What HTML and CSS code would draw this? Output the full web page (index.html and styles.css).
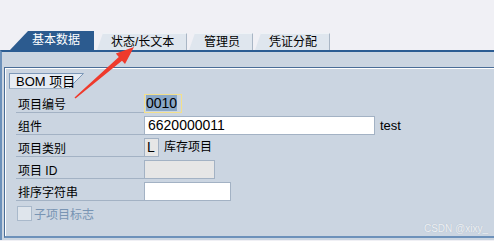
FILE: index.html
```html
<!DOCTYPE html>
<html lang="zh-CN">
<head>
    <meta charset="UTF-8">
    <title>BOM 项目</title>
    <link rel="stylesheet" href="styles.css">
</head>
<body>
    <div class="tabs">
        <div class="tab active">基本数据</div>
        <div class="tab tab-status">状态/长文本</div>
        <div class="tab tab-admin">管理员</div>
        <div class="tab tab-voucher">凭证分配</div>
    </div>

    <div class="panel">
        <div class="group">
            <div class="group-title">
                <span class="group-name">BOM 项目</span>
                <svg class="group-slant" width="16" height="16" viewBox="0 0 16 16">
                    <polygon points="0,0 15.5,0 0,16" fill="#e6ecf3"/>
                    <line x1="15.5" y1="0.5" x2="0.5" y2="15.5" stroke="#7d98b8" stroke-width="1"/>
                    <line x1="0" y1="0.5" x2="15.5" y2="0.5" stroke="#7d98b8" stroke-width="1"/>
                </svg>
            </div>
            <div class="rows">
                <div class="label">项目编号</div>
                <div class="value"><span class="field field-focus"><span class="sel">0010</span></span></div>

                <div class="label">组件</div>
                <div class="value"><span class="field field-wide">6620000011</span><span class="after">test</span></div>

                <div class="label">项目类别</div>
                <div class="value"><span class="field field-small">L</span><span class="after">库存项目</span></div>

                <div class="label">项目 ID</div>
                <div class="value"><span class="field field-disabled"></span></div>

                <div class="label">排序字符串</div>
                <div class="value"><span class="field field-sort"></span></div>
            </div>
            <div class="check-row">
                <span class="checkbox"></span>
                <span class="check-label">子项目标志</span>
            </div>
        </div>
    </div>

    <!-- annotation arrow drawn over the screenshot -->
    <svg class="arrow" width="494" height="241" viewBox="0 0 494 241">
        <polygon points="74.5,97.5 118.8,56.9 115.8,53.5 134,47 125,64.1 122,60.7 75.5,98.5" fill="#ef3a2c"/>
    </svg>

    <div class="watermark">CSDN @xixy_</div>
</body>
</html>
```

FILE: styles.css
```css
/* Page */
body {
    margin: 0;
    width: 494px;
    height: 241px;
    overflow: hidden;
    position: relative;
    background-color: #f0f0f5;
    font-family: "Liberation Sans", "Noto Sans CJK SC", sans-serif;
    font-size: 12px;
    color: #000;
}

/* Tab strip */
.tabs {
    display: flex;
    align-items: flex-end;
    height: 19px;
    padding: 31px 0 0 10px;
}

.tab {
    box-sizing: border-box;
    height: 17px;
    line-height: 16px;
    padding-left: 14px;
    margin-right: 2px;
    background-color: #dfe6ee;
    border-top: 1px solid #eef2f6;
    border-right: 1px solid #a9b6c5;
    clip-path: polygon(6px 0, 100% 0, 100% 100%, 0 100%);
    white-space: nowrap;
}

.tab.active {
    width: 84px;
    height: 19px;
    line-height: 19px;
    padding-left: 22px;
    margin-right: 3px;
    background-color: #2c5b8f;
    border: none;
    color: #fff;
    clip-path: polygon(18px 0, 100% 0, 100% 100%, 0 100%);
}

.tab-status {
    width: 90px;
}

.tab-admin {
    width: 64px;
    padding-left: 15px;
}

.tab-voucher {
    width: 75px;
}

/* Main panel */
.panel {
    height: 190px;
    border-top: 2px solid #2b5c92;
    border-left: 2px solid #6d91ba;
    background-color: #cbd5e1;
    padding: 15px 0 0 2px;
    box-sizing: border-box;
}

/* Group box */
.group {
    height: 171px;
    box-sizing: border-box;
    border-top: 1px solid #4a6d97;
    border-left: 1px solid #4a6d97;
    border-bottom: 2px solid #6d91ba;
    box-shadow: inset 1px 1px 0 #ffffff;
    padding: 5px 0 0 4px;
}

.group-title {
    display: flex;
    height: 16px;
}

.group-name {
    box-sizing: border-box;
    width: 59px;
    height: 16px;
    line-height: 15px;
    padding-left: 6px;
    background-color: #e6ecf3;
    border: 1px solid #7d98b8;
    border-right: none;
    border-bottom-color: #9fb2c8;
    white-space: nowrap;
    font-size: 13px;
    position: relative;
    z-index: 1;
}

.group-slant {
    display: block;
    flex-shrink: 0;
}

/* Form rows */
.rows {
    display: grid;
    grid-template-columns: 128px auto;
    grid-auto-rows: 22px;
    margin: 2px 0 0 7px;
}

.label {
    border-bottom: 1px solid #a3b2c4;
    padding: 4px 0 0 2px;
    line-height: 20px;
    overflow: hidden;
}

.value {
    display: flex;
    align-items: flex-start;
    padding-top: 3px;
}

.field {
    box-sizing: border-box;
    display: inline-block;
    height: 19px;
    line-height: 17px;
    padding-left: 3px;
    border: 1px solid #a3b2c4;
    background-color: #fff;
    font-size: 14px;
}

.field-focus {
    width: 38px;
    border-color: #f3e08a;
    background-color: #cbd5e1;
    padding-left: 1px;
}

.sel {
    background-color: #8aa8c8;
}

.field-wide {
    width: 231px;
}

.field-small {
    width: 15px;
    padding-left: 2px;
    background-color: #e6e6e6;
}

.field-disabled {
    width: 71px;
    background-color: #e6e6e6;
}

.field-sort {
    width: 87px;
}

.after {
    margin-left: 5px;
    line-height: 19px;
}

.field-wide + .after {
    font-size: 13px;
}

/* Checkbox row */
.check-row {
    display: flex;
    align-items: center;
    gap: 2px;
    margin: 4px 0 0 8px;
}

.checkbox {
    box-sizing: border-box;
    width: 15px;
    height: 15px;
    border: 1px solid #a9b9cb;
    background-color: #dfe5ec;
}

.check-label {
    color: #7894b3;
}

/* Overlays */
.arrow {
    position: absolute;
    left: 0;
    top: 0;
}

.watermark {
    position: absolute;
    right: 6px;
    bottom: 7px;
    font-size: 10px;
    color: #eef1f5;
    text-shadow: 0 0 1px #a7b2c0;
}
```
